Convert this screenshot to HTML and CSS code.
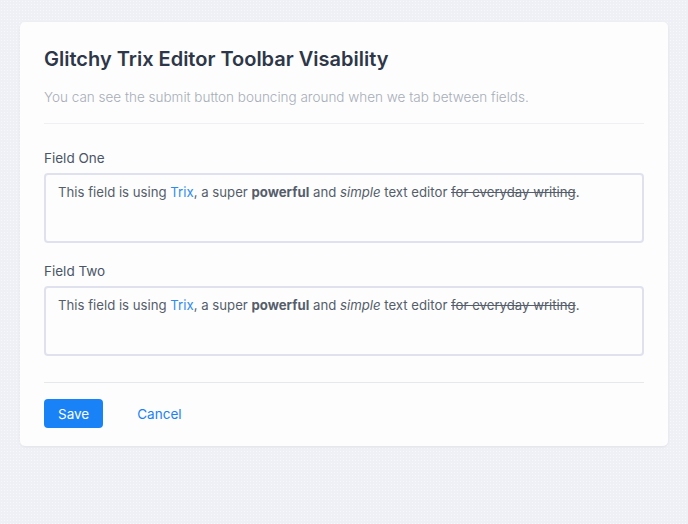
FILE: index.html
```html
<!DOCTYPE html>
<html lang="en">
<head>
<meta charset="UTF-8">
<meta name="viewport" content="width=device-width, initial-scale=1.0">
<title>Glitchy Trix Editor Toolbar Visability</title>
<link rel="stylesheet" href="styles.css">
</head>
<body>
    <div class="card">
        <h1>Glitchy Trix Editor Toolbar Visability</h1>
        <p class="lead">You can see the submit button bouncing around when we tab between fields.</p>
        <hr>
        <form>
            <label class="field-label">Field One</label>
            <div class="editor">This field is using <a href="#">Trix</a>, a super <b>powerful</b> and <i>simple</i> text editor <s>for everyday writing</s>.</div>

            <label class="field-label second">Field Two</label>
            <div class="editor">This field is using <a href="#">Trix</a>, a super <b>powerful</b> and <i>simple</i> text editor <s>for everyday writing</s>.</div>

            <hr class="bottom">
            <div class="actions">
                <button type="submit" class="btn-save">Save</button>
                <a href="#" class="btn-cancel">Cancel</a>
            </div>
        </form>
    </div>
</body>
</html>
```

FILE: styles.css
```css
body {
    margin: 0;
    padding: 22px 20px;
    background-color: #eef0f5;
    background-image: radial-gradient(#f7f8fb 0.6px, transparent 0.8px);
    background-size: 3px 3px;
    font-family: Inter, "Noto Sans", sans-serif;
    color: #4a5568;
}
.card {
    background-color: #fdfdfd;
    border-radius: 5px;
    box-shadow: 0 1px 3px rgba(0, 0, 0, 0.06);
    padding: 23px 24px 18px;
}
h1 {
    margin: 0;
    font-size: 20px;
    line-height: 28px;
    font-weight: 600;
    color: #2d3748;
}
.lead {
    margin: 14px 0 0;
    font-size: 13.5px;
    line-height: 20px;
    color: #a7adb8;
    font-weight: 300;
}
hr {
    border: none;
    border-top: 1px solid #eef0f3;
    margin: 16px 0 0;
}
hr.bottom {
    border-top-color: #e6e8ec;
    margin-top: 26px;
}
.field-label {
    display: block;
    margin-top: 24px;
    font-size: 13.5px;
    line-height: 20px;
    color: #4a5568;
}
.field-label.second {
    margin-top: 18px;
}
.editor {
    margin-top: 5px;
    border: 2px solid #dfe2ee;
    border-radius: 4px;
    padding: 6px 12px;
    box-sizing: border-box;
    height: 70px;
    font-size: 13.2px;
    line-height: 22px;
    color: #555d6b;
    background: #fdfdfd;
}
.editor a {
    color: #2d8cf0;
    text-decoration: none;
}
.editor b {
    font-weight: 700;
}
.actions {
    display: flex;
    align-items: center;
    gap: 34px;
    margin-top: 16px;
}
.btn-save {
    background-color: #1a82f7;
    color: #fff;
    border: none;
    border-radius: 4px;
    font-family: inherit;
    font-size: 13.5px;
    padding: 0 14px;
    height: 29px;
    cursor: pointer;
}
.btn-cancel {
    color: #1a82f7;
    font-size: 13.5px;
    text-decoration: none;
}
```
